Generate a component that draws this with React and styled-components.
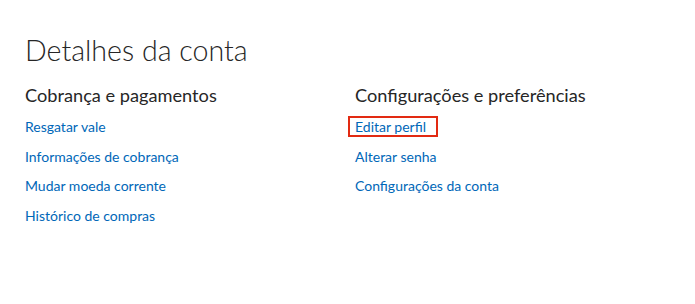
import React from 'react';
import styled, { createGlobalStyle } from 'styled-components';

const GlobalStyle = createGlobalStyle`
  html, body { margin: 0; padding: 0; background: #ffffff; }
  body { font-family: "Lato", "Open Sans", sans-serif; }
`;

const Page = styled.main`
  padding: 32px 25px 0 25px;
  width: 695px;
  height: 304px;
  box-sizing: border-box;
  background: #ffffff;
`;

const Title = styled.h1`
  margin: 0;
  font-family: "Lato", sans-serif;
  font-weight: 300;
  font-size: 28.6px;
  line-height: 36px;
  color: #262626;
`;

const Columns = styled.div`
  display: grid;
  grid-template-columns: 330px 1fr;
  margin-top: 14.5px;
`;

const Section = styled.section`
  display: flex;
  flex-direction: column;
`;

const Heading = styled.h2`
  margin: 0 0 10.5px 0;
  font-family: "Lato", sans-serif;
  font-weight: 400;
  font-size: 18.2px;
  line-height: 24px;
  color: #262626;
`;

const LinkList = styled.ul`
  list-style: none;
  margin: 0;
  padding: 0;
  display: flex;
  flex-direction: column;
  gap: 9.6px;
`;

const Item = styled.li`
  font-size: 14px;
  line-height: 20px;
`;

const Link = styled.a`
  position: relative;
  color: #0067b8;
  text-decoration: none;
  font-family: "Lato", sans-serif;
  font-size: 14px;
  line-height: 20px;
  cursor: pointer;

  ${({ $focused }) =>
    $focused &&
    `
    &::after {
      content: "";
      position: absolute;
      left: -7px;
      right: -12px;
      top: -2px;
      bottom: -2px;
      border: 2px solid #e22a12;
      pointer-events: none;
    }
  `}
`;

const sections = [
  {
    title: 'Cobrança e pagamentos',
    links: ['Resgatar vale', 'Informações de cobrança', 'Mudar moeda corrente', 'Histórico de compras'],
  },
  {
    title: 'Configurações e preferências',
    links: ['Editar perfil', 'Alterar senha', 'Configurações da conta'],
    focused: 'Editar perfil',
  },
];

export default function App() {
  return (
    <>
      <GlobalStyle />
      <Page>
        <Title>Detalhes da conta</Title>
        <Columns>
          {sections.map((s) => (
            <Section key={s.title}>
              <Heading>{s.title}</Heading>
              <LinkList>
                {s.links.map((l) => (
                  <Item key={l}>
                    <Link href="#" $focused={s.focused === l}>{l}</Link>
                  </Item>
                ))}
              </LinkList>
            </Section>
          ))}
        </Columns>
      </Page>
    </>
  );
}
